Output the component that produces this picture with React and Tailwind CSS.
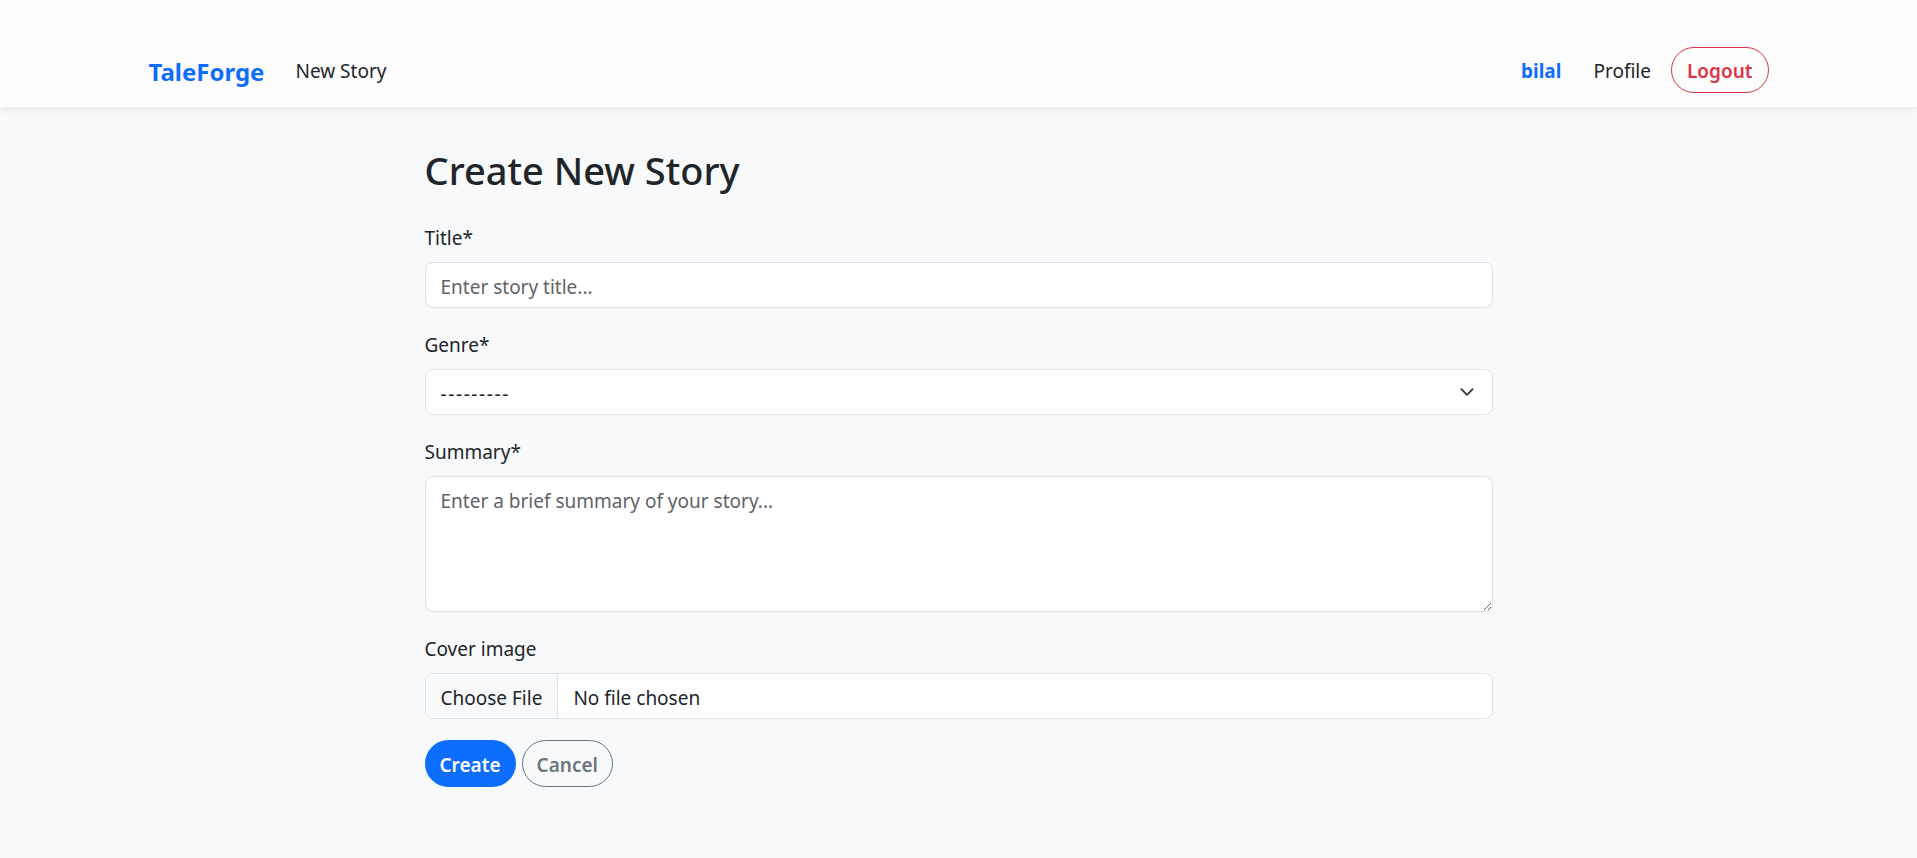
const font = { fontFamily: '"Noto Sans", "Open Sans", Arial, sans-serif' };

function ChevronDown() {
  return (
    <svg width="20" height="15" viewBox="0 0 16 16" fill="none" className="pointer-events-none absolute right-[16px] top-1/2 -translate-y-1/2">
      <path d="m2 5 6 6 6-6" stroke="#343a40" strokeWidth="2" strokeLinecap="round" strokeLinejoin="round" />
    </svg>
  );
}

function Navbar() {
  return (
    <nav className="h-[107px] bg-[#fdfdfd] shadow-[0_2px_8px_rgba(0,0,0,0.09)] relative z-10">
      <div className="mx-auto flex w-[1620px] items-center justify-between pt-[47px]">
        <div className="flex h-[46px] items-center pt-[3px]">
          <a href="#" className="text-[24px] font-bold text-[#0d6efd]">TaleForge</a>
          <a href="#" className="ml-[31px] text-[19px] text-[#212529]">New Story</a>
        </div>
        <div className="flex h-[46px] items-center">
          <a href="#" className="pt-[3px] text-[19px] font-bold text-[#0d6efd]">bilal</a>
          <a href="#" className="ml-[32px] pt-[3px] text-[19px] text-[#212529]">Profile</a>
          <button className="ml-[20px] h-[46px] rounded-full border border-[#dc3545] px-[15px] pt-[3px] text-[19px] font-semibold text-[#dc3545]">
            Logout
          </button>
        </div>
      </div>
    </nav>
  );
}

function Field({ label, children, last }) {
  return (
    <div className={last ? 'mb-[21px]' : 'mb-[22px]'}>
      <label className="mb-[9px] block text-[19px] leading-[30px] text-[#212529]">{label}</label>
      {children}
    </div>
  );
}

export default function App() {
  return (
    <div className="min-h-screen bg-[#f8f9fa]" style={font}>
      <Navbar />
      <main className="mx-auto w-[1068px] pt-[40px]">
        <h2 className="mb-[30px] text-[38px] font-medium leading-[46px] text-[#212529]">Create New Story</h2>
        <form>
          <Field label="Title*">
            <input
              type="text"
              placeholder="Enter story title..."
              className="block h-[46px] w-full rounded-[8px] border border-[#dee2e6] bg-white px-[15px] pt-[4px] text-[19px] text-[#212529] outline-none placeholder:text-[#5f6368]"
            />
          </Field>
          <Field label="Genre*">
            <div className="relative">
              <select className="block h-[46px] w-full appearance-none rounded-[8px] border border-[#dee2e6] bg-white px-[15px] pt-[4px] text-[19px] tracking-[1.6px] text-[#212529] outline-none">
                <option>---------</option>
                <option>Fantasy</option>
                <option>Mystery</option>
                <option>Romance</option>
              </select>
              <ChevronDown />
            </div>
          </Field>
          <Field label="Summary*">
            <textarea
              placeholder="Enter a brief summary of your story..."
              className="block h-[136px] w-full rounded-[8px] border border-[#dee2e6] bg-white px-[15px] pt-[10px] pb-[6px] text-[19px] leading-[28px] text-[#212529] outline-none placeholder:text-[#5f6368]"
            />
          </Field>
          <Field label="Cover image" last>
            <div className="flex h-[46px] w-full overflow-hidden rounded-[8px] border border-[#dee2e6] bg-white text-[19px] text-[#212529]">
              <span className="flex items-center border-r border-[#dee2e6] bg-[#f8f9fa] px-[15px] pt-[4px]">Choose File</span>
              <span className="flex items-center px-[15px] pt-[4px]">No file chosen</span>
            </div>
          </Field>
          <div className="flex gap-[6px]">
            <button type="submit" className="h-[47px] rounded-full bg-[#0d6efd] px-[15px] pt-[4px] text-[19px] font-semibold text-white">
              Create
            </button>
            <button type="button" className="h-[47px] rounded-full border border-[#6c757d] px-[14px] pt-[4px] text-[19px] font-semibold text-[#6c757d]">
              Cancel
            </button>
          </div>
        </form>
      </main>
    </div>
  );
}
